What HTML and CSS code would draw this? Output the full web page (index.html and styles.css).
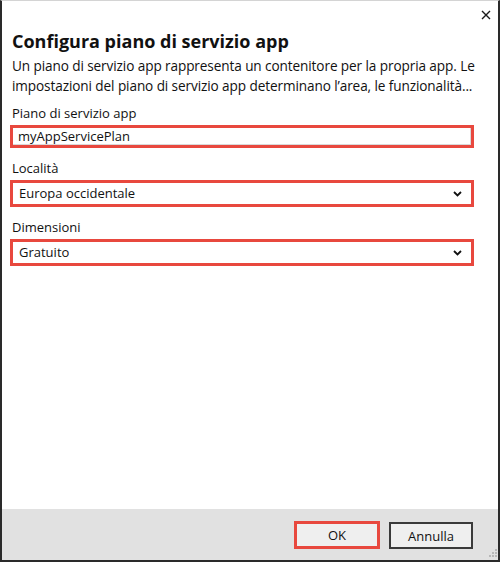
FILE: index.html
```html
<!DOCTYPE html>
<html lang="it">
<head>
<meta charset="utf-8">
<title>Configura piano di servizio app</title>
<link rel="stylesheet" href="styles.css">
</head>
<body>
<div class="window">
  <div class="titlebar">
    <svg class="close" width="10" height="10" viewBox="0 0 10 10"><path d="M1 1 L9 9 M9 1 L1 9" stroke="#1a1a1a" stroke-width="1.4" fill="none"/></svg>
  </div>
  <div class="content">
    <h1 class="title">Configura piano di servizio app</h1>
    <p class="desc"><span class="line">Un piano di servizio app rappresenta un contenitore per la propria app. Le</span><span class="line">impostazioni del piano di servizio app determinano l’area, le funzionalità...</span></p>

    <div class="field">
      <div class="label">Piano di servizio app</div>
      <div class="box input-box"><span class="value">myAppServicePlan</span></div>
    </div>
    <div class="field">
      <div class="label">Località</div>
      <div class="box select-box"><span class="value">Europa occidentale</span>
        <svg class="chev" width="9" height="6" viewBox="0 0 9 6"><path d="M1 1 L4.5 4.5 L8 1" stroke="#111" stroke-width="1.8" fill="none"/></svg>
      </div>
    </div>
    <div class="field">
      <div class="label">Dimensioni</div>
      <div class="box select-box"><span class="value">Gratuito</span>
        <svg class="chev" width="9" height="6" viewBox="0 0 9 6"><path d="M1 1 L4.5 4.5 L8 1" stroke="#111" stroke-width="1.8" fill="none"/></svg>
      </div>
    </div>
  </div>
  <div class="footer">
    <button class="btn btn-ok">OK</button>
    <button class="btn btn-cancel">Annulla</button>
    <svg class="grip" width="10" height="10" viewBox="0 0 10 10">
      <g fill="#b8b8b8">
        <rect x="8" y="0" width="2" height="2"/>
        <rect x="5" y="3" width="2" height="2"/><rect x="8" y="3" width="2" height="2"/>
        <rect x="2" y="6" width="2" height="2"/><rect x="5" y="6" width="2" height="2"/><rect x="8" y="6" width="2" height="2"/>
      </g>
    </svg>
  </div>
</div>
</body>
</html>
```

FILE: styles.css
```css
* { box-sizing: border-box; }
html, body { margin: 0; padding: 0; }
body {
  width: 500px;
  height: 562px;
  background: #fff;
  font-family: "Open Sans", "Noto Sans", "Liberation Sans", sans-serif;
  color: #111;
}
.window {
  width: 500px;
  height: 562px;
  display: flex;
  flex-direction: column;
  border-top: 1px solid #d4d4d4;
  border-left: 2px solid #2a2a2a;
  border-right: 2px solid #2a2a2a;
  border-bottom: 2px solid #2a2a2a;
  background: #fff;
}
.titlebar {
  height: 28px;
  display: flex;
  justify-content: flex-end;
  align-items: flex-start;
  padding: 9px 7px 0 0;
}
.close { display: block; }
.content {
  flex: 1;
  padding: 0 22px 0 8px;
}
.title {
  margin: 0;
  font-size: 18px;
  font-weight: 700;
  line-height: 24px;
  padding-left: 2px;
}
.desc {
  margin: 3px 0 0 0;
  font-size: 13.6px;
  line-height: 20px;
  padding-left: 2px;
  letter-spacing: -0.1px;
}
.line { display: block; white-space: nowrap; }
.field { margin-top: 8px; }
.field + .field { margin-top: 11px; }
.label {
  font-size: 13px;
  line-height: 18px;
  padding-left: 2px;
  margin-bottom: 3px;
}
.box {
  width: 464px;
  border: 3px solid #e8483e;
  display: flex;
  align-items: center;
  font-size: 13px;
}
.input-box {
  height: 23px;
  padding-left: 5px;
  box-shadow: inset -1px -1px 0 #d9d9d9;
}
.select-box {
  height: 27px;
  padding: 0 9px 0 6px;
  justify-content: space-between;
}
.chev { display: block; }
.value { line-height: 17px; }
.footer {
  position: relative;
  height: 51px;
  background: #e1e1e1;
  display: flex;
  justify-content: flex-end;
  align-items: center;
  gap: 9px;
  padding: 1px 25px 0 0;
}
.btn {
  font-family: inherit;
  font-size: 13px;
  color: #111;
  background: #efefef;
  margin: 0;
  padding: 0;
  cursor: pointer;
}
.btn-ok {
  width: 86px;
  height: 28px;
  border: 3px solid #e8483e;
}
.btn-cancel {
  width: 84px;
  height: 27px;
  border: 2px solid #3a3a3a;
  margin-top: 1px;
}
.grip {
  position: absolute;
  right: 1px;
  bottom: 1px;
}
```
